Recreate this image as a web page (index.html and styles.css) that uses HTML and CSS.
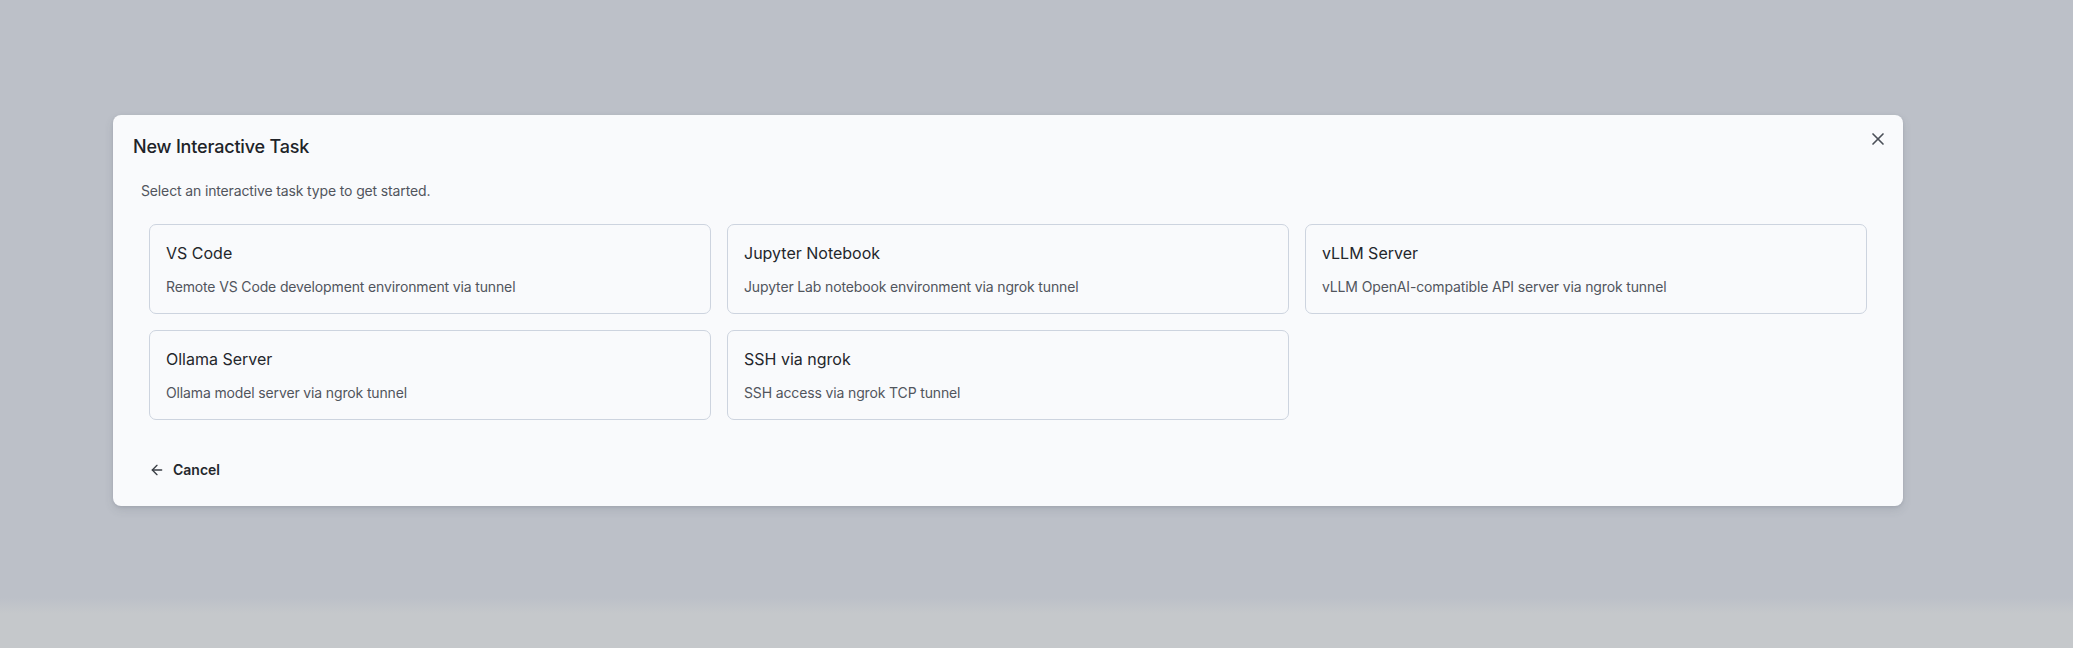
FILE: index.html
```html
<!DOCTYPE html>
<html lang="en">
<head>
<meta charset="utf-8">
<title>New Interactive Task</title>
<link rel="stylesheet" href="styles.css">
</head>
<body>
<div class="overlay">
  <div class="modal" role="dialog" aria-labelledby="dlg-title">
    <button class="close" aria-label="Close">
      <svg width="20" height="20" viewBox="0 0 24 24" fill="none" stroke="currentColor" stroke-width="2" stroke-linecap="round" stroke-linejoin="round"><path d="M18 6 6 18"/><path d="m6 6 12 12"/></svg>
    </button>
    <h2 class="title" id="dlg-title">New Interactive Task</h2>
    <p class="subtitle">Select an interactive task type to get started.</p>
    <div class="grid">
      <div class="card">
        <div class="card-title">VS Code</div>
        <div class="card-desc">Remote VS Code development environment via tunnel</div>
      </div>
      <div class="card">
        <div class="card-title">Jupyter Notebook</div>
        <div class="card-desc">Jupyter Lab notebook environment via ngrok tunnel</div>
      </div>
      <div class="card">
        <div class="card-title">vLLM Server</div>
        <div class="card-desc">vLLM OpenAI-compatible API server via ngrok tunnel</div>
      </div>
      <div class="card">
        <div class="card-title">Ollama Server</div>
        <div class="card-desc">Ollama model server via ngrok tunnel</div>
      </div>
      <div class="card">
        <div class="card-title">SSH via ngrok</div>
        <div class="card-desc">SSH access via ngrok TCP tunnel</div>
      </div>
    </div>
    <div class="footer">
      <button class="cancel">
        <svg width="16" height="16" viewBox="0 0 24 24" fill="none" stroke="currentColor" stroke-width="2" stroke-linecap="round" stroke-linejoin="round"><path d="m12 19-7-7 7-7"/><path d="M19 12H5"/></svg>
        <span>Cancel</span>
      </button>
    </div>
  </div>
</div>
</body>
</html>
```

FILE: styles.css
```css
* { box-sizing: border-box; }

html, body {
  margin: 0;
  padding: 0;
}

body {
  width: 2073px;
  height: 648px;
  overflow: hidden;
  font-family: "Inter", "Liberation Sans", sans-serif;
  background: linear-gradient(to bottom, #bcc0c8 0, #bcc0c8 597px, #c5c8cb 614px, #c5c8cb 648px);
}

.overlay {
  padding-top: 115px;
  padding-left: 113px;
}

.modal {
  position: relative;
  width: 1790px;
  background: #f9fafc;
  border-radius: 8px;
  box-shadow: 0 4px 10px rgba(60, 64, 80, 0.12), 0 1px 3px rgba(60, 64, 80, 0.12);
  padding: 18px 36px 18px 36px;
}

.close {
  position: absolute;
  top: 14px;
  right: 15px;
  width: 20px;
  height: 20px;
  padding: 0;
  border: 0;
  background: none;
  color: #4b5058;
  display: flex;
  align-items: center;
  justify-content: center;
}

.title {
  margin: 0 0 0 -16px;
  font-size: 18px;
  line-height: 28px;
  font-weight: 500;
  letter-spacing: -0.01em;
  color: #202328;
}

.subtitle {
  margin: 20px 0 0 -8px;
  font-size: 14px;
  line-height: 20px;
  letter-spacing: -0.01em;
  color: #51555d;
}

.grid {
  margin-top: 23px;
  display: grid;
  grid-template-columns: repeat(3, 1fr);
  gap: 16px;
}

.card {
  border: 1px solid #cdd4df;
  border-radius: 7px;
  background: #f9fafc;
  padding: 16px 16px 16px 16px;
}

.card-title {
  font-size: 16px;
  line-height: 24px;
  font-weight: 400;
  color: #24272c;
}

.card-desc {
  margin-top: 12px;
  font-size: 14px;
  line-height: 20px;
  letter-spacing: -0.01em;
  color: #51555d;
}

.footer {
  margin-top: 32px;
  display: flex;
}

.cancel {
  display: flex;
  align-items: center;
  gap: 8px;
  padding: 8px 0;
  border: 0;
  background: none;
  font-family: inherit;
  font-size: 14px;
  line-height: 20px;
  font-weight: 600;
  color: #24272c;
}

.cancel svg {
  color: #3a3e45;
}
```
